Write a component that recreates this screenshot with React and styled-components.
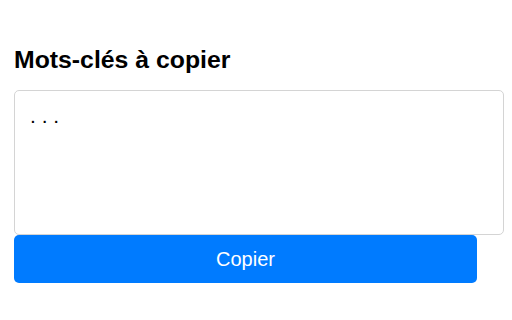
import React, { useRef } from "react";
import styled, { createGlobalStyle } from "styled-components";

const Global = createGlobalStyle`
  body {
    margin: 0;
    background: #fff;
    font-family: "Liberation Sans", Arial, sans-serif;
  }
`;

const Page = styled.div`
  display: flex;
  flex-direction: column;
  padding: 44px 8px 0 14px;
`;

const Title = styled.h2`
  margin: 0 0 14px;
  font-size: 24.8px;
  line-height: 32px;
  font-weight: 700;
  color: #000;
`;

const Box = styled.textarea`
  box-sizing: border-box;
  width: 490px;
  height: 145px;
  padding: 11px 15px;
  border: 1px solid #d4d4d4;
  border-radius: 5px;
  font-family: "Liberation Sans", Arial, sans-serif;
  font-size: 21px;
  line-height: 28px;
  color: #000;
  resize: none;
  outline: none;
`;

const CopyButton = styled.button`
  box-sizing: border-box;
  width: 463px;
  height: 48px;
  margin-top: 0;
  border: none;
  border-radius: 5px;
  background: #007bff;
  color: #fff;
  font-family: "Liberation Sans", Arial, sans-serif;
  font-size: 20px;
  cursor: pointer;
`;

export default function App() {
  const ref = useRef(null);
  const copy = () => {
    if (ref.current) {
      ref.current.select();
      navigator.clipboard && navigator.clipboard.writeText(ref.current.value);
    }
  };

  return (
    <Page>
      <Global />
      <Title>Mots-clés à copier</Title>
      <Box ref={ref} defaultValue=". . ." />
      <CopyButton onClick={copy}>Copier</CopyButton>
    </Page>
  );
}
